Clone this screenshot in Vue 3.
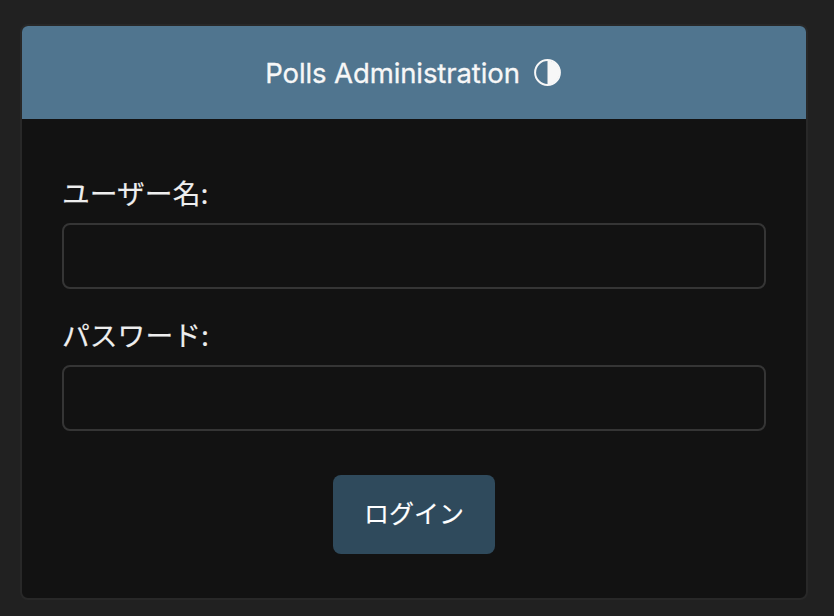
<script setup>
import { ref } from 'vue'
const username = ref('')
const password = ref('')
</script>

<template>
  <div class="page">
    <main class="card">
      <header class="head">
        <h1>Polls Administration</h1>
        <svg class="theme" viewBox="0 0 27 27" width="27" height="27">
          <circle cx="13.5" cy="13.5" r="12.4" fill="none" stroke="currentColor" stroke-width="2" />
          <path d="M13.5 1.5a12 12 0 0 1 0 24z" fill="currentColor" />
        </svg>
      </header>
      <form @submit.prevent>
        <label for="user">ユーザー名:</label>
        <input id="user" v-model="username" type="text" />
        <label for="pass">パスワード:</label>
        <input id="pass" v-model="password" type="password" />
        <button type="submit">ログイン</button>
      </form>
    </main>
  </div>
</template>

<style>
body {
  background: #212121;
}
</style>

<style scoped>
.page {
  box-sizing: border-box;
  height: 616px;
  padding: 24px 26px 16px 20px;
  background: #212121;
  font-family: Inter, "Noto Sans CJK JP", sans-serif;
  color: #eee;
}
.card {
  box-sizing: border-box;
  height: 576px;
  border: 2px solid #282828;
  border-radius: 8px;
  background: #121212;
  overflow: hidden;
}
.head {
  box-sizing: border-box;
  display: flex;
  align-items: center;
  justify-content: center;
  gap: 14px;
  height: 93px;
  padding: 0 2px 1px 0;
  background: #50758f;
  color: #f7f7f7;
}
h1 {
  margin: 0;
  padding-top: 1px;
  font-size: 27.5px;
  font-weight: 400;
  line-height: 36px;
  letter-spacing: -0.1px;
  -webkit-text-stroke: 0.3px currentColor;
}
.theme {
  display: block;
}
form {
  display: flex;
  flex-direction: column;
  padding: 56px 40px 0;
}
label {
  height: 48px;
  font-size: 27.8px;
  line-height: 38px;
  -webkit-text-stroke: 0.15px currentColor;
}
input {
  box-sizing: border-box;
  width: 100%;
  height: 66px;
  margin: 0 0 28px;
  padding: 12px;
  border: 2px solid #353535;
  border-radius: 8px;
  background: #121212;
  color: #eee;
  font: inherit;
  font-size: 26px;
  outline: none;
}
button {
  align-self: center;
  width: 162px;
  height: 79px;
  margin-top: 16px;
  padding: 0 0 5px;
  border: 0;
  border-radius: 8px;
  background: #2f4a5c;
  color: #fff;
  font: inherit;
  font-size: 25px;
  -webkit-text-stroke: 0.15px currentColor;
}
</style>
